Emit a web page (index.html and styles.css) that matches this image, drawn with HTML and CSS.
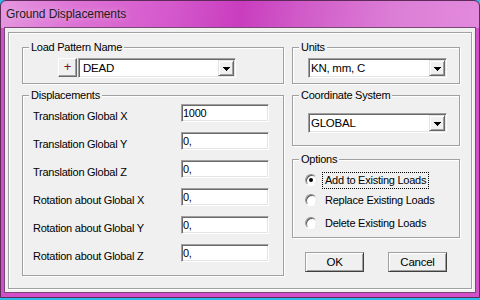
FILE: index.html
```html
<!DOCTYPE html>
<html lang="en">
<head>
    <meta charset="utf-8">
    <title>Ground Displacements</title>
    <link rel="stylesheet" href="styles.css">
</head>
<body>
<div class="window">
    <div class="caption">Ground Displacements</div>
    <div class="client">
        <div class="frame">
            <div class="col-left">
                <fieldset class="grp grp-pattern">
                    <legend>Load Pattern Name</legend>
                    <div class="pattern-row">
                        <span class="btn-plus">+</span>
                        <span class="combo combo-pattern">
                            <span class="combo-text">DEAD</span>
                            <span class="combo-arrow"><svg width="7" height="4" viewBox="0 0 7 4"><rect x="0" y="0" width="7" height="1"/><rect x="1" y="1" width="5" height="1"/><rect x="2" y="2" width="3" height="1"/><rect x="3" y="3" width="1" height="1"/></svg></span>
                        </span>
                    </div>
                </fieldset>
                <fieldset class="grp grp-disp">
                    <legend>Displacements</legend>
                    <div class="rows">
                        <div class="row"><label>Translation Global X</label><span class="field">1000</span></div>
                        <div class="row"><label>Translation Global Y</label><span class="field">0,</span></div>
                        <div class="row"><label>Translation Global Z</label><span class="field">0,</span></div>
                        <div class="row"><label>Rotation about Global X</label><span class="field">0,</span></div>
                        <div class="row"><label>Rotation about Global Y</label><span class="field">0,</span></div>
                        <div class="row"><label>Rotation about Global Z</label><span class="field">0,</span></div>
                    </div>
                </fieldset>
            </div>
            <div class="col-right">
                <fieldset class="grp grp-units">
                    <legend>Units</legend>
                    <span class="combo combo-wide">
                        <span class="combo-text">KN, mm, C</span>
                        <span class="combo-arrow"><svg width="7" height="4" viewBox="0 0 7 4"><rect x="0" y="0" width="7" height="1"/><rect x="1" y="1" width="5" height="1"/><rect x="2" y="2" width="3" height="1"/><rect x="3" y="3" width="1" height="1"/></svg></span>
                    </span>
                </fieldset>
                <fieldset class="grp grp-coord">
                    <legend>Coordinate System</legend>
                    <span class="combo combo-wide">
                        <span class="combo-text">GLOBAL</span>
                        <span class="combo-arrow"><svg width="7" height="4" viewBox="0 0 7 4"><rect x="0" y="0" width="7" height="1"/><rect x="1" y="1" width="5" height="1"/><rect x="2" y="2" width="3" height="1"/><rect x="3" y="3" width="1" height="1"/></svg></span>
                    </span>
                </fieldset>
                <fieldset class="grp grp-options">
                    <legend>Options</legend>
                    <div class="opts">
                        <div class="opt"><span class="radio checked"></span><span class="opt-text focus">Add to Existing Loads</span></div>
                        <div class="opt"><span class="radio"></span><span class="opt-text">Replace Existing Loads</span></div>
                        <div class="opt opt-last"><span class="radio"></span><span class="opt-text">Delete Existing Loads</span></div>
                    </div>
                </fieldset>
                <div class="buttons">
                    <span class="btn">OK</span>
                    <span class="btn">Cancel</span>
                </div>
            </div>
        </div>
    </div>
</div>
</body>
</html>
```

FILE: styles.css
```css
body {
    margin: 0;
    width: 480px;
    height: 300px;
    overflow: hidden;
    background-color: #2cb8e8;
    font-family: "Liberation Sans", Arial, sans-serif;
    font-size: 11px;
    letter-spacing: -0.25px;
    color: #000;
}

/* window frame */
.window {
    box-sizing: border-box;
    height: 298px;
    padding: 0 3px 4px 3px;
    border: 1px solid #5e2a5a;
    border-radius: 6px 6px 0 0;
    background: linear-gradient(100deg, #e596df 0%, #dd72d5 16%, #d458cb 36%, #c93dbf 50%, #d05ac8 62%, #dc7ed6 82%, #e28add 100%) top / 100% 27px no-repeat, #d24fc9;
}

.caption {
    height: 26px;
    line-height: 26px;
    padding-left: 2px;
    font-size: 12px;
    letter-spacing: -0.1px;
    color: #1c1c1c;
    text-shadow: 0 0 6px rgba(255, 255, 255, 0.5);
}

.client {
    box-sizing: border-box;
    height: 266px;
    padding: 4px 3px 3px 3px;
    border: 1px solid #7a4776;
    background-color: #f0f0f0;
}

.frame {
    box-sizing: border-box;
    display: flex;
    gap: 8px;
    width: 464px;
    height: 257px;
    padding: 8px 0 0 13px;
    border: 1px solid #a0a0a0;
    box-shadow: inset 1px 1px #fff, 1px 1px #fff;
}

.col-left {
    display: flex;
    flex-direction: column;
    gap: 5px;
    width: 262px;
}

.col-right {
    display: flex;
    flex-direction: column;
    width: 168px;
}

/* group boxes */
.grp {
    box-sizing: border-box;
    min-width: 0;
    margin: 0;
    padding: 0;
    border: 1px solid #a0a0a0;
    box-shadow: inset 1px 1px #fff, 1px 1px #fff;
}

.grp legend {
    margin-left: 6px;
    padding: 0 2px;
    line-height: 13px;
    background-color: #f0f0f0;
}

.grp-pattern {
    height: 43px;
}

.pattern-row {
    display: flex;
    padding: 4px 0 0 35px;
}

.btn-plus {
    box-sizing: border-box;
    width: 19px;
    height: 19px;
    margin-right: 1px;
    border: 1px solid;
    border-color: #fff #696969 #696969 #fff;
    box-shadow: inset -1px -1px #a0a0a0;
    text-align: center;
    line-height: 16px;
    font-size: 13px;
    color: #7a1414;
}

.grp-disp {
    height: 187px;
}

.rows {
    display: flex;
    flex-direction: column;
    gap: 10px;
    padding: 2px 0 0 10px;
}

.row {
    display: flex;
    height: 18px;
}

.row label {
    width: 148px;
    padding-top: 6px;
    line-height: 13px;
}

.field {
    box-sizing: border-box;
    width: 88px;
    height: 18px;
    padding-left: 1px;
    border: 1px solid;
    border-color: #a0a0a0 #fff #fff #a0a0a0;
    box-shadow: inset 1px 1px #696969, inset -1px -1px #e3e3e3;
    background-color: #fff;
    line-height: 16px;
}

/* combo boxes */
.combo {
    box-sizing: border-box;
    display: flex;
    height: 20px;
    padding: 1px;
    border: 1px solid;
    border-color: #a0a0a0 #fff #fff #a0a0a0;
    box-shadow: inset 1px 1px #696969, inset -1px -1px #e3e3e3;
    background-color: #fff;
}

.combo-pattern {
    width: 158px;
}

.combo-pattern .combo-text {
    padding-left: 3px;
}

.combo-wide {
    width: 139px;
    margin-left: 15px;
}

.combo-text {
    flex: 1;
    padding-left: 1px;
    line-height: 17px;
    font-size: 11.5px;
}

.combo-arrow {
    box-sizing: border-box;
    display: flex;
    align-items: center;
    justify-content: center;
    width: 16px;
    height: 16px;
    padding-top: 1px;
    border: 1px solid;
    border-color: #e3e3e3 #696969 #696969 #e3e3e3;
    box-shadow: inset 1px 1px #fff, inset -1px -1px #a0a0a0;
    background-color: #f0f0f0;
}

.combo-arrow svg {
    display: block;
    shape-rendering: crispEdges;
}

.grp-units {
    height: 43px;
}

.grp-units .combo {
    margin-top: 4px;
}

.grp-coord {
    height: 57px;
    margin-top: 5px;
}

.grp-coord .combo {
    margin-top: 11px;
}

/* options */
.grp-options {
    height: 85px;
    margin-top: 7px;
}

.opts {
    padding: 4px 0 0 12px;
}

.opt {
    display: flex;
    align-items: center;
    height: 20px;
}

.opt-last {
    margin-top: 3px;
}

.radio {
    position: relative;
    box-sizing: border-box;
    width: 12px;
    height: 12px;
    border: 1px solid;
    border-color: #8c8c8c #e8e8e8 #fff #9a9a9a;
    border-radius: 50%;
    box-shadow: inset 1px 1px #5a5a5a;
    background-color: #fff;
}

.checked::after {
    content: "";
    position: absolute;
    left: 3px;
    top: 3px;
    width: 4px;
    height: 4px;
    border-radius: 50%;
    background-color: #000;
}

.opt-text {
    margin-left: 5px;
    padding: 1px 2px;
    border: 1px dotted transparent;
    line-height: 13px;
}

.focus {
    border-color: #000;
}

/* buttons */
.buttons {
    display: flex;
    gap: 24px;
    margin-top: 14px;
    padding-left: 13px;
}

.btn {
    box-sizing: border-box;
    width: 59px;
    height: 20px;
    border: 1px solid;
    border-color: #a0a0a0 #404040 #404040 #a0a0a0;
    box-shadow: inset 1px 1px #fff, inset -1px -1px #a0a0a0;
    background-color: #f0f0f0;
    text-align: center;
    line-height: 18px;
    font-size: 11.5px;
}
```
